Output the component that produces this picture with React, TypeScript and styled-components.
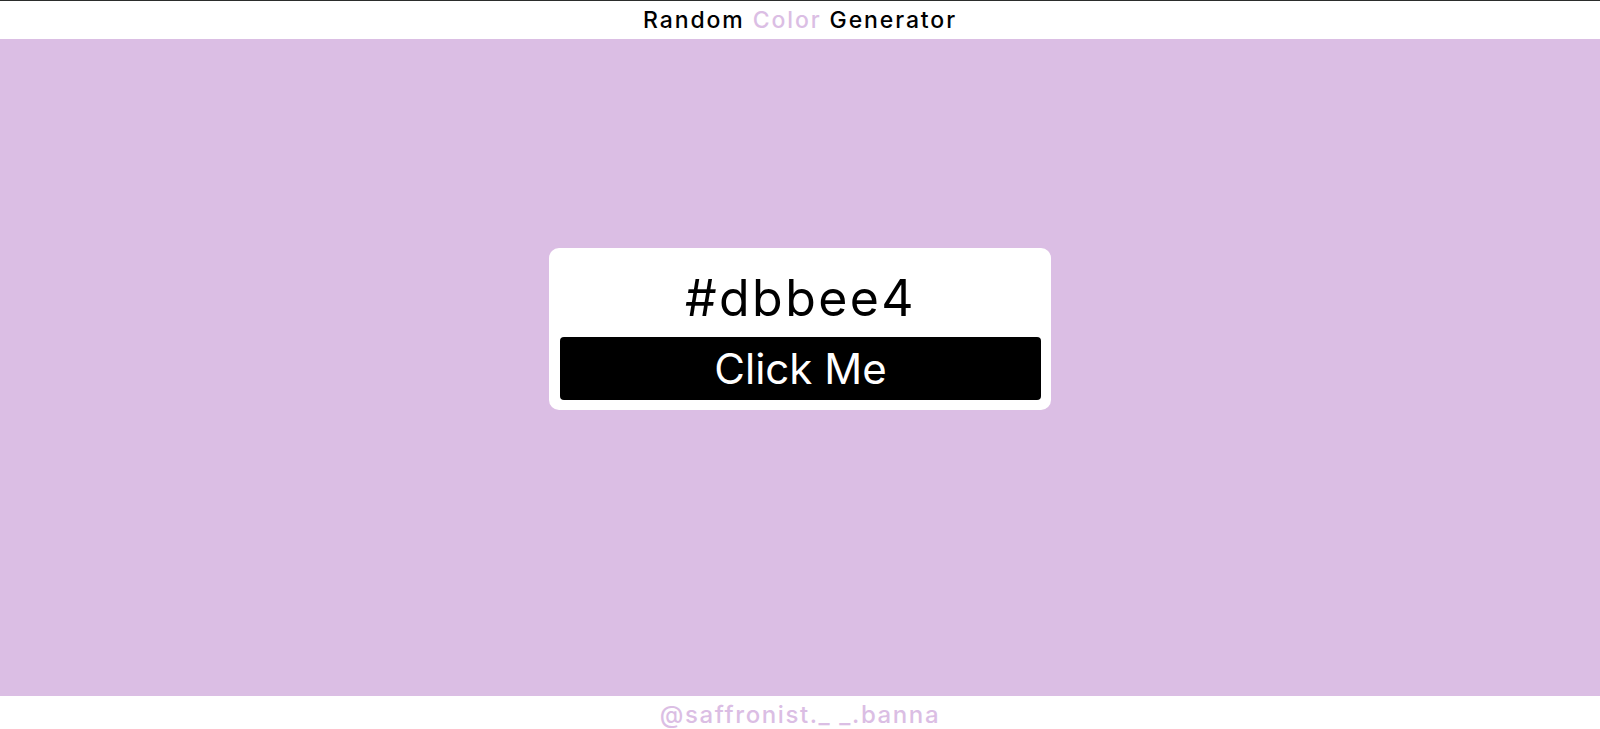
import React, { useState } from "react";
import styled, { createGlobalStyle } from "styled-components";

const GlobalStyle = createGlobalStyle`
  html, body {
    margin: 0;
    padding: 0;
    height: 100%;
    overflow: hidden;
  }
  body {
    font-family: "Inter", "Noto Sans", sans-serif;
    background: #ffffff;
  }
`;

const Page = styled.div`
  display: flex;
  flex-direction: column;
  height: 729px;
  border-top: 1px solid #2b2d2c;
  box-sizing: border-box;
`;

const Header = styled.header`
  height: 38px;
  display: flex;
  align-items: center;
  justify-content: center;
  font-size: 23px;
  font-weight: 500;
  letter-spacing: 1.9px;
  color: #000;
`;

const Accent = styled.span<{ $color: string }>`
  color: ${(p) => p.$color};
`;

const Main = styled.main<{ $bg: string }>`
  flex: 1;
  background: ${(p) => p.$bg};
  display: flex;
  align-items: center;
  justify-content: center;
  padding-bottom: 77px;
`;

const Card = styled.div`
  width: 502px;
  box-sizing: border-box;
  background: #fff;
  border-radius: 10px;
  padding: 11px 10px 10px 11px;
  display: flex;
  flex-direction: column;
  align-items: center;
`;

const Hex = styled.h2`
  margin: 0;
  height: 78px;
  display: flex;
  align-items: center;
  font-size: 50px;
  font-weight: 400;
  letter-spacing: 2.4px;
  color: #000;
`;

const Button = styled.button`
  width: 100%;
  height: 63px;
  border: none;
  border-radius: 4px;
  background: #000;
  color: #fff;
  font-family: inherit;
  font-size: 42px;
  cursor: pointer;
`;

const Footer = styled.footer<{ $color: string }>`
  height: 33px;
  display: flex;
  align-items: center;
  justify-content: center;
  font-size: 24px;
  font-weight: 500;
  letter-spacing: 1.6px;
  color: ${(p) => p.$color};
  padding-top: 4px;
  box-sizing: border-box;
`;

const randomHex = () =>
  "#" +
  Math.floor(Math.random() * 0xffffff)
    .toString(16)
    .padStart(6, "0");

export default function App() {
  const [color, setColor] = useState("#dbbee4");

  return (
    <>
      <GlobalStyle />
      <Page>
        <Header>
          Random&nbsp;<Accent $color={color}>Color</Accent>&nbsp;Generator
        </Header>
        <Main $bg={color}>
          <Card>
            <Hex>{color}</Hex>
            <Button onClick={() => setColor(randomHex())}>Click Me</Button>
          </Card>
        </Main>
        <Footer $color={color}>@saffronist._ _.banna</Footer>
      </Page>
    </>
  );
}
